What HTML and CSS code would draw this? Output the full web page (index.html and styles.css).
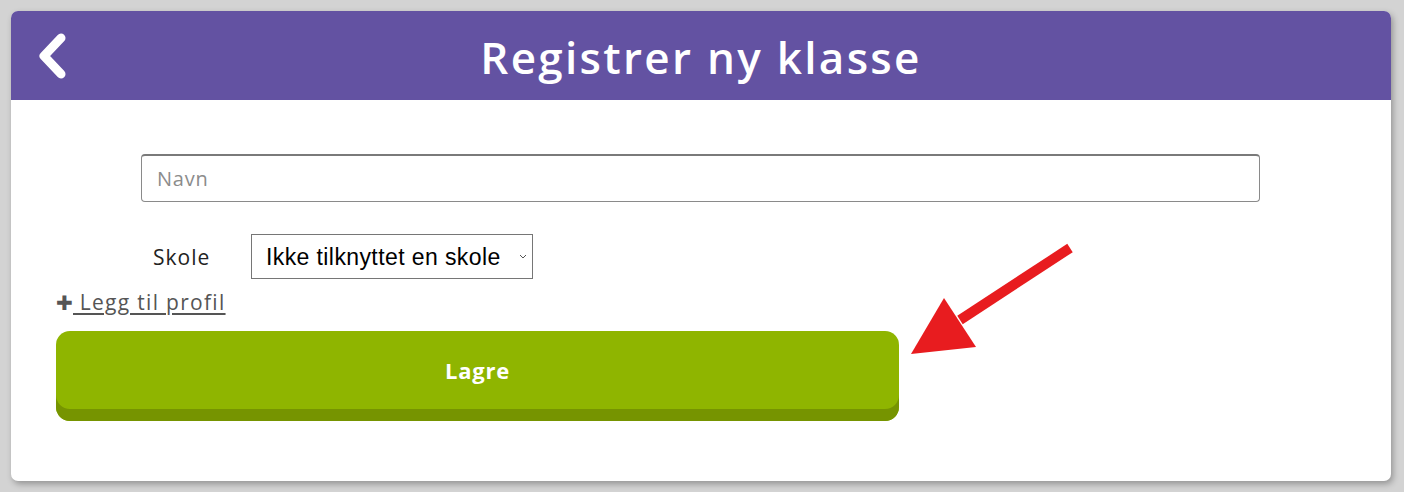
FILE: index.html
```html
<!DOCTYPE html>
<html lang="no">
<head>
<meta charset="utf-8">
<link rel="stylesheet" href="styles.css">
</head>
<body>
<div class="card">
  <header class="header">
    <a class="back" href="#" aria-label="Tilbake">
      <svg width="32" height="46" viewBox="0 0 32 46"><path d="M24 5 L7 23 L24 41" fill="none" stroke="#fff" stroke-width="9" stroke-linecap="round" stroke-linejoin="round"/></svg>
    </a>
    <h1 class="title">Registrer ny klasse</h1>
  </header>
  <main class="content">
    <input class="name-input" type="text" placeholder="Navn">
    <div class="school-row">
      <label class="school-label">Skole</label>
      <select class="school-select"><option>Ikke tilknyttet en skole</option></select>
    </div>
    <a class="add-profile" href="#"><span class="plus">✚</span> Legg til profil</a>
    <button class="save">Lagre</button>
  </main>
  <svg class="arrow" width="180" height="120" viewBox="0 0 180 120">
    <line x1="170" y1="8" x2="60" y2="80" stroke="#e81c1f" stroke-width="10"/>
    <polygon points="11,114 44,58 76,107" fill="#e81c1f"/>
  </svg>
</div>
</body>
</html>
```
FILE: styles.css
```css
* { box-sizing: border-box; }
html, body { margin: 0; height: 100%; }
body {
  background: #d3d3d3;
  padding: 11px 13px 11px 11px;
  font-family: "Open Sans", "Lato", sans-serif;
}
.card {
  position: relative;
  width: 1380px;
  height: 470px;
  background: #fff;
  border-radius: 7px;
  overflow: hidden;
  box-shadow: 2px 3px 6px rgba(0,0,0,0.3);
}
.header {
  height: 89px;
  background: #6352a2;
  display: flex;
  align-items: center;
  justify-content: center;
  position: relative;
}
.back {
  position: absolute;
  left: 26px;
  top: 22px;
  display: block;
  line-height: 0;
}
.title {
  margin: 0;
  color: #fff;
  font-size: 44px;
  font-weight: 600;
  letter-spacing: 2.3px;
  padding-top: 2px;
}
.content {
  padding: 54px 0 0 45px;
  display: flex;
  flex-direction: column;
  align-items: flex-start;
}
.name-input {
  margin-left: 85px;
  width: 1119px;
  height: 48px;
  border: 1px solid #8a8a8a;
  border-top: 2px solid #7a7a7a;
  border-radius: 4px;
  padding: 0 15px;
  font-family: inherit;
  font-size: 20px;
  letter-spacing: 0.8px;
  color: #333;
}
.name-input::placeholder { color: #8c8c8c; }
.school-row {
  margin-top: 32px;
  margin-left: 97px;
  display: flex;
  align-items: center;
}
.school-label {
  font-size: 21px;
  letter-spacing: 1px;
  color: #222;
  width: 98px;
}
.school-select {
  -webkit-appearance: none;
  appearance: none;
  width: 282px;
  height: 45px;
  font-family: "Liberation Sans", Arial, sans-serif;
  font-size: 23px;
  letter-spacing: 0.4px;
  color: #000;
  border: 1px solid #767676;
  border-radius: 0;
  background: #fff url("data:image/svg+xml;utf8,<svg xmlns='http://www.w3.org/2000/svg' width='8' height='5' viewBox='0 0 8 5'><path d='M1 1 L4 4 L7 1' fill='none' stroke='%23555' stroke-width='1'/></svg>") no-repeat right 5px center;
  padding: 0 14px;
}
.add-profile {
  margin-top: 9px;
  font-size: 21px;
  letter-spacing: 1.3px;
  color: #555;
  text-decoration: underline;
  text-underline-offset: 3px;
}
.plus { display: inline-block; font-size: 20px; letter-spacing: 0; }
.save {
  margin-top: 15px;
  width: 843px;
  height: 90px;
  background: #8fb500;
  border: none;
  border-radius: 14px;
  box-shadow: inset 0 -12px 0 #769400;
  color: #fff;
  font-family: inherit;
  font-size: 22px;
  font-weight: 700;
  letter-spacing: 0.8px;
  padding-bottom: 14px;
}
.arrow {
  position: absolute;
  left: 889px;
  top: 229px;
}
```
